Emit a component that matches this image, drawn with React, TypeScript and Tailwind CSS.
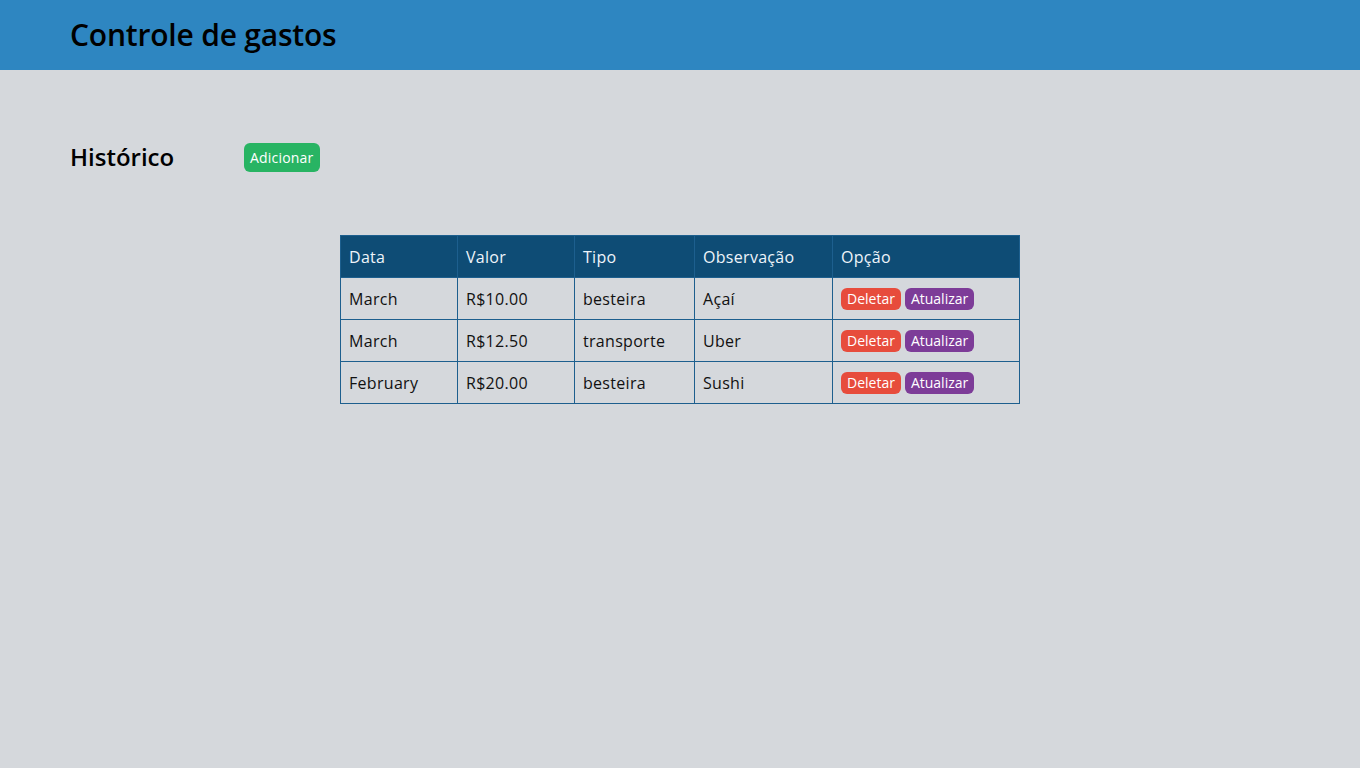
const gastos = [
  { data: 'March', valor: 'R$10.00', tipo: 'besteira', obs: 'Açaí' },
  { data: 'March', valor: 'R$12.50', tipo: 'transporte', obs: 'Uber' },
  { data: 'February', valor: 'R$20.00', tipo: 'besteira', obs: 'Sushi' },
];

const cell = 'border border-[#1d5f8e] px-2 h-[42px] text-left align-middle';

export default function App() {
  return (
    <div className="min-h-screen bg-[#d5d8dc] font-['Open_Sans',sans-serif] text-[#111]">
      <header className="h-[70px] bg-[#2e86c1] flex items-center px-[70px]">
        <h1 className="text-[30px] font-semibold tracking-[-0.2px] text-black -mt-[1px]">Controle de gastos</h1>
      </header>

      <main className="px-[70px] pt-[73px]">
        <div className="flex items-center h-[30px]">
          <h2 className="w-[174px] text-[24px] font-semibold text-black -mt-[3px]">Histórico</h2>
          <button className="h-[29px] px-[6px] rounded-md bg-[#28b463] text-white text-[14px] tracking-[0.2px] -mt-[1px]">
            Adicionar
          </button>
        </div>

        <div className="flex justify-center pt-[62px]">
          <table className="border-collapse w-[679px] table-fixed text-[16px] tracking-[0.3px]">
            <colgroup>
              <col className="w-[117px]" />
              <col className="w-[117px]" />
              <col className="w-[120px]" />
              <col className="w-[138px]" />
              <col className="w-[187px]" />
            </colgroup>
            <thead>
              <tr className="bg-[#0e4c75] text-[#eef4fa]">
                <th className={`${cell} font-normal`}>Data</th>
                <th className={`${cell} font-normal`}>Valor</th>
                <th className={`${cell} font-normal`}>Tipo</th>
                <th className={`${cell} font-normal`}>Observação</th>
                <th className={`${cell} font-normal`}>Opção</th>
              </tr>
            </thead>
            <tbody>
              {gastos.map((g, i) => (
                <tr key={i}>
                  <td className={cell}>{g.data}</td>
                  <td className={cell}>{g.valor}</td>
                  <td className={cell}>{g.tipo}</td>
                  <td className={cell}>{g.obs}</td>
                  <td className={cell}>
                    <div className="flex gap-1 mt-[1px]">
                      <button className="h-[22px] px-[6px] rounded-md bg-[#e74c3c] text-white text-[14px] leading-none tracking-normal">
                        Deletar
                      </button>
                      <button className="h-[22px] px-[6px] rounded-md bg-[#7d3c98] text-white text-[14px] leading-none tracking-normal">
                        Atualizar
                      </button>
                    </div>
                  </td>
                </tr>
              ))}
            </tbody>
          </table>
        </div>
      </main>
    </div>
  );
}
